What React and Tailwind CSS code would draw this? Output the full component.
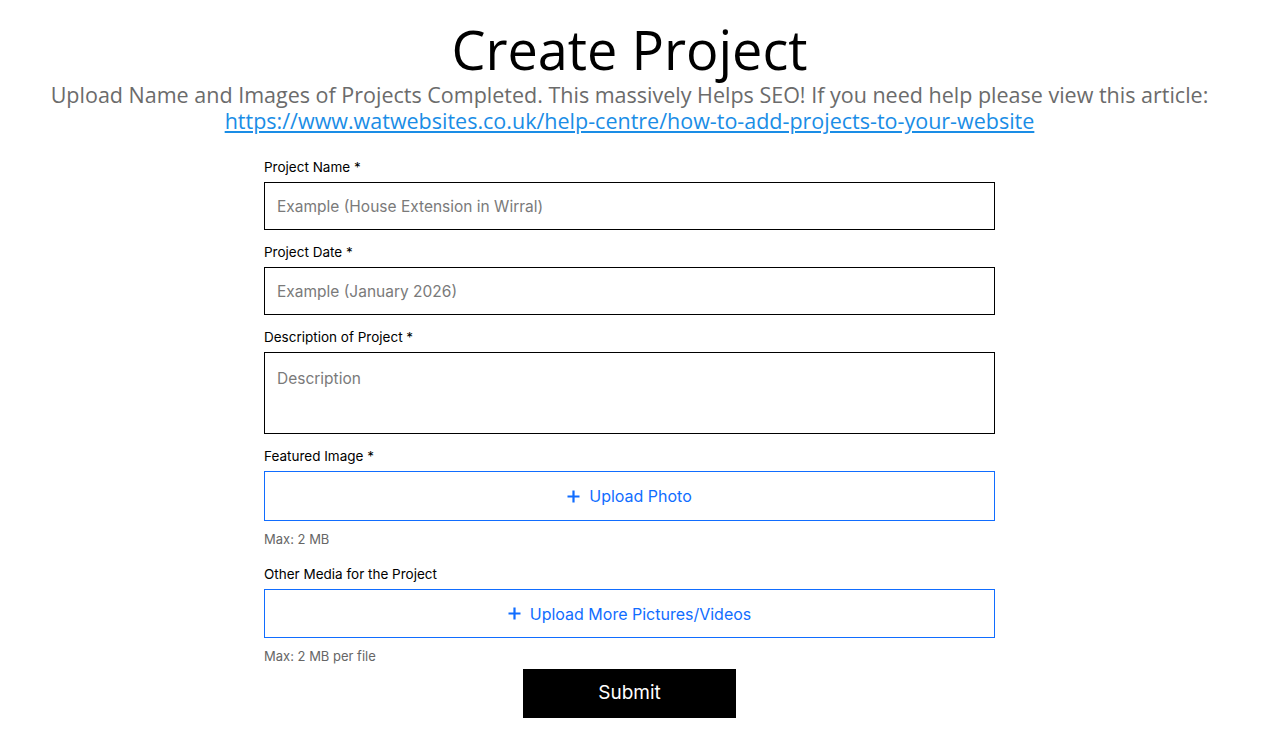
import React from 'react';

const PlusIcon = () => (
  <svg width="13" height="13" viewBox="0 0 13 13" className="shrink-0">
    <path d="M6.5 0.5v12M0.5 6.5h12" stroke="#116dff" strokeWidth="2.2" />
  </svg>
);

const Label = ({ children }) => (
  <div className="h-[20px] leading-[20px] text-[13.5px] text-black mb-[5px]">{children}</div>
);

const inputCls =
  'w-full h-[48px] border border-black px-[12px] text-[15.5px] placeholder:text-[#7a7a7a] outline-none';

const UploadBox = ({ text, height }) => (
  <button
    type="button"
    className={`w-full ${height} border border-[#116dff] bg-white flex items-center justify-center gap-[9px] text-[16px] text-[#116dff]`}
  >
    <PlusIcon />
    <span>{text}</span>
  </button>
);

const App = () => {
  return (
    <div className="min-h-screen bg-white pr-[10px]" style={{ fontFamily: 'Inter, "Noto Sans", sans-serif' }}>
      <header className="pt-[16px] text-center">
        <h1
          className="text-[54px] leading-[66px] text-black"
          style={{ fontFamily: '"Open Sans", sans-serif' }}
        >
          Create Project
        </h1>
        <div
          className="text-[21.5px] leading-[26px] text-[#6b6b6b]"
          style={{ fontFamily: '"Open Sans", sans-serif' }}
        >
          <p>
            Upload Name and Images of Projects Completed. This massively Helps SEO! If you need help please view this article:
          </p>
          <p>
            <a href="#" className="text-[#1a8de6] underline">
              https://www.watwebsites.co.uk/help-centre/how-to-add-projects-to-your-website
            </a>
          </p>
        </div>
      </header>

      <form className="w-[731px] mx-auto mt-[23px]" onSubmit={e => e.preventDefault()}>
        <Label>Project Name *</Label>
        <input className={inputCls} placeholder="Example (House Extension in Wirral)" />

        <div className="mt-[12px]">
          <Label>Project Date *</Label>
          <input className={inputCls} placeholder="Example (January 2026)" />
        </div>

        <div className="mt-[12px]">
          <Label>Description of Project *</Label>
          <textarea
            className="block w-full h-[82px] border border-black px-[12px] pt-[14px] text-[15.5px] placeholder:text-[#7a7a7a] outline-none resize-none"
            placeholder="Description"
          />
        </div>

        <div className="mt-[12px]">
          <Label>Featured Image *</Label>
          <UploadBox text="Upload Photo" height="h-[50px]" />
          <div className="mt-[9px] h-[18px] leading-[18px] text-[13px] text-[#666]">Max: 2 MB</div>
        </div>

        <div className="mt-[16px]">
          <Label>Other Media for the Project</Label>
          <UploadBox text="Upload More Pictures/Videos" height="h-[49px]" />
          <div className="mt-[9px] h-[18px] leading-[18px] text-[13px] text-[#666]">Max: 2 MB per file</div>
        </div>

        <div className="mt-[4px] flex justify-center">
          <button type="submit" className="w-[213px] h-[49px] bg-black text-white text-[19px]">
            Submit
          </button>
        </div>
      </form>
    </div>
  );
};

export default App;
